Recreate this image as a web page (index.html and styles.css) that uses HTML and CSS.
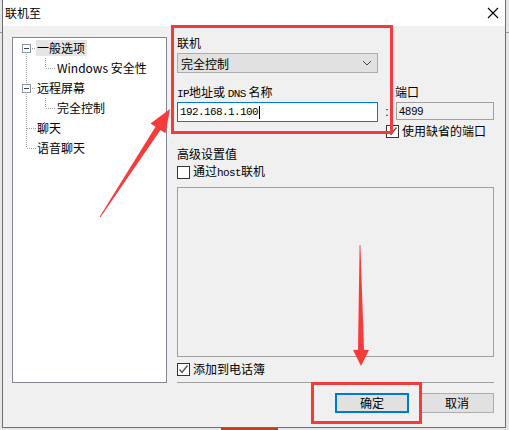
FILE: index.html
```html
<!DOCTYPE html>
<html lang="zh-CN">
<head>
    <meta charset="UTF-8">
    <title>联机至</title>
    <link rel="stylesheet" href="styles.css">
</head>
<body>
    <div class="window">
        <div class="titlebar">
            <span class="title">联机至</span>
            <svg class="close" width="12" height="12" viewBox="0 0 12 12">
                <path d="M1 1 L11 11 M11 1 L1 11" stroke="#000" stroke-width="1.1" fill="none"/>
            </svg>
        </div>

        <div class="body">
            <!-- arbre des options -->
            <div class="tree">
                <div class="row">
                    <span class="cell first"><span class="expander"></span></span>
                    <span class="label selected">一般选项</span>
                </div>
                <div class="row">
                    <span class="cell pass"></span>
                    <span class="cell child-last"></span>
                    <span class="label">Windows 安全性</span>
                </div>
                <div class="row">
                    <span class="cell mid"><span class="expander"></span></span>
                    <span class="label">远程屏幕</span>
                </div>
                <div class="row">
                    <span class="cell pass"></span>
                    <span class="cell child-last"></span>
                    <span class="label">完全控制</span>
                </div>
                <div class="row">
                    <span class="cell tee"></span>
                    <span class="label">聊天</span>
                </div>
                <div class="row">
                    <span class="cell last"></span>
                    <span class="label">语音聊天</span>
                </div>
            </div>

            <div class="panel">
                <div class="field-label">联机</div>
                <div class="select">
                    <span>完全控制</span>
                    <svg width="10" height="6" viewBox="0 0 10 6">
                        <path d="M1 1 L5 5 L9 1" stroke="#444" stroke-width="1" fill="none"/>
                    </svg>
                </div>

                <div class="address">
                    <div class="field-label"><span class="latin">IP</span>地址或 <span class="latin">DNS</span> 名称</div>
                    <div></div>
                    <div class="field-label port-label">端口</div>
                    <div class="input active"><span class="latin">192.168.1.100</span><span class="caret"></span></div>
                    <div class="colon">:</div>
                    <div class="input disabled">4899</div>
                </div>

                <label class="check default-port">
                    <span class="box">
                        <svg width="11" height="11" viewBox="0 0 11 11"><path d="M1.5 5.5 L4 8.5 L9.5 1.5" stroke="#555" stroke-width="1.4" fill="none"/></svg>
                    </span>
                    <span>使用缺省的端口</span>
                </label>

                <div class="field-label advanced">高级设置值</div>
                <label class="check host">
                    <span class="box"></span>
                    <span>通过<span class="latin">host</span>联机</span>
                </label>

                <div class="list-box"></div>

                <label class="check phonebook">
                    <span class="box">
                        <svg width="11" height="11" viewBox="0 0 11 11"><path d="M1.5 5.5 L4 8.5 L9.5 1.5" stroke="#555" stroke-width="1.4" fill="none"/></svg>
                    </span>
                    <span>添加到电话簿</span>
                </label>

                <div class="separator"></div>

                <div class="buttons">
                    <button class="btn default">确定</button>
                    <button class="btn">取消</button>
                </div>
            </div>
        </div>
    </div>

    <!-- annotations rouges -->
    <div class="mark mark-connect"></div>
    <div class="mark mark-ok"></div>
    <svg class="arrows" width="509" height="430" viewBox="0 0 509 430">
        <polygon fill="#f73a3a" points="99.6,216.7 155.5,126.8 150.5,123.5 170,109 165.5,133.3 160.5,130 100.4,217.3"/>
        <polygon fill="#f73a3a" points="359.6,245 358,350 353,350 361,366 369,350 364,350 360.4,245"/>
    </svg>
</body>
</html>
```

FILE: styles.css
```css
body {
    margin: 0;
    width: 509px;
    height: 430px;
    overflow: hidden;
    position: relative;
    font-family: "Noto Sans CJK SC", "Microsoft YaHei", sans-serif;
    font-size: 12px;
    color: #000;
    background:
        linear-gradient(#c43c1c, #c43c1c) 221px 428px / 57px 2px no-repeat,
        linear-gradient(#9a9a9a, #9a9a9a) 0 32px / 509px 1px no-repeat,
        #e6e6e6;
}

.window {
    box-sizing: border-box;
    width: 504px;
    height: 428px;
    margin-left: 2px;
    border: 1px solid #6f6f6f;
    border-top: 0;
    background: #f0f0f0;
    display: flex;
    flex-direction: column;
}

.titlebar {
    height: 26px;
    flex: none;
    background: #fff;
    display: flex;
    align-items: center;
    justify-content: space-between;
    padding: 0 6px 0 2px;
}

.title {
    line-height: 16px;
}

.body {
    display: flex;
    gap: 10px;
    padding: 9px 0 0 9px;
}

/* arbre */
.tree {
    box-sizing: border-box;
    width: 155px;
    height: 346px;
    margin-top: 2px;
    border: 1px solid #828790;
    background: #fff;
    padding-left: 8px;
}

.row {
    height: 20px;
    display: flex;
    align-items: center;
}

.label {
    line-height: 16px;
    padding: 0 2px 0 1px;
    white-space: nowrap;
}

.label.selected {
    background: #e5e5e5;
}

.cell {
    flex: none;
    width: 15px;
    height: 20px;
    display: flex;
    align-items: center;
    background-repeat: no-repeat;
    --v: repeating-linear-gradient(to bottom, #a0a0a0 0 1px, transparent 1px 2px);
    --h: repeating-linear-gradient(to right, #a0a0a0 0 1px, transparent 1px 2px);
}

.cell.first {
    background-image: var(--v), var(--h);
    background-size: 1px 10px, 6px 1px;
    background-position: 5px 10px, 9px 10px;
}

.cell.mid {
    background-image: var(--v), var(--h);
    background-size: 1px 20px, 6px 1px;
    background-position: 5px 0, 9px 10px;
}

.cell.pass {
    background-image: var(--v);
    background-size: 1px 20px;
    background-position: 5px 0;
}

.cell.tee {
    background-image: var(--v), var(--h);
    background-size: 1px 20px, 9px 1px;
    background-position: 5px 0, 6px 10px;
}

.cell.last {
    background-image: var(--v), var(--h);
    background-size: 1px 10px, 9px 1px;
    background-position: 5px 0, 6px 10px;
}

.cell.child-last {
    width: 20px;
    background-image: var(--v), var(--h);
    background-size: 1px 10px, 10px 1px;
    background-position: 9px 0, 10px 10px;
}

.expander {
    box-sizing: border-box;
    width: 9px;
    height: 9px;
    margin-left: 1px;
    border: 1px solid #8a96a3;
    background: linear-gradient(#33445a, #33445a) center / 5px 1px no-repeat, #fff;
}

/* panneau de droite */
.panel {
    width: 317px;
    display: flex;
    flex-direction: column;
}

.field-label {
    line-height: 16px;
    height: 16px;
    white-space: nowrap;
}

.latin {
    font-family: "Liberation Mono", monospace;
    font-size: 11px;
    letter-spacing: -0.6px;
}

.select {
    box-sizing: border-box;
    height: 20px;
    width: 201px;
    margin-top: 2px;
    border: 1px solid #adadad;
    background: #e1e1e1;
    display: flex;
    align-items: center;
    justify-content: space-between;
    padding: 0 5px 0 3px;
}

.address {
    display: grid;
    grid-template-columns: 201px 18px 98px;
    row-gap: 2px;
    margin-top: 11px;
}

.port-label {
    margin-left: -1px;
}

.input {
    box-sizing: border-box;
    border: 1px solid #a0a0a0;
    display: flex;
    align-items: center;
    padding-left: 2px;
}

.input.active {
    height: 20px;
    border-color: #0078d7;
    background: #fff;
}

.input.disabled {
    height: 18px;
    background: #f0f0f0;
    font-family: "Liberation Sans", sans-serif;
    font-size: 11px;
}

.caret {
    width: 1px;
    height: 13px;
    margin-left: 1px;
    background: #000;
}

.colon {
    display: flex;
    align-items: center;
    justify-content: center;
    height: 20px;
    font-family: "Liberation Sans", sans-serif;
}

.check {
    display: flex;
    align-items: center;
    gap: 3px;
    height: 16px;
    line-height: 16px;
    white-space: nowrap;
}

.box {
    box-sizing: border-box;
    flex: none;
    width: 13px;
    height: 13px;
    border: 1px solid #333;
    background: #fff;
    display: flex;
    align-items: center;
    justify-content: center;
}

.default-port {
    margin: 1px 0 0 209px;
}

.advanced {
    margin-top: 7px;
}

.host {
    margin-top: 2px;
}

.list-box {
    box-sizing: border-box;
    height: 170px;
    margin-top: 7px;
    border: 1px solid #a0a0a0;
    background: #f0f0f0;
}

.phonebook {
    margin-top: 4px;
}

.separator {
    height: 1px;
    margin-top: 5px;
    background: #a0a0a0;
}

.buttons {
    display: flex;
    justify-content: flex-end;
    gap: 11px;
    margin-top: 10px;
}

.btn {
    box-sizing: border-box;
    width: 74px;
    height: 20px;
    padding: 0;
    border: 1px solid #adadad;
    background: #e1e1e1;
    font-family: inherit;
    font-size: 12px;
    line-height: 16px;
    color: #000;
}

.btn.default {
    border: 2px solid #0078d7;
}

/* annotations */
.mark {
    position: absolute;
    box-sizing: border-box;
    border: 3px solid #f43b3b;
}

.mark-connect {
    left: 171px;
    top: 25px;
    width: 222px;
    height: 109px;
}

.mark-ok {
    left: 311px;
    top: 382px;
    width: 111px;
    height: 42px;
}

.arrows {
    position: absolute;
    left: 0;
    top: 0;
    pointer-events: none;
}
```
